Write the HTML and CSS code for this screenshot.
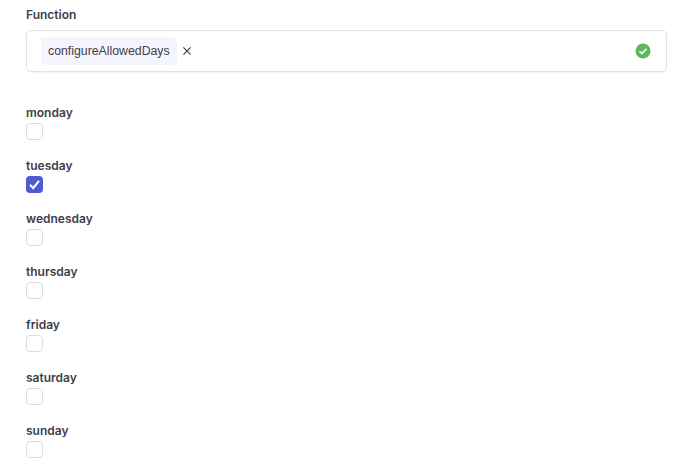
FILE: index.html
```html
<!DOCTYPE html>
<html lang="en">
<head>
<meta charset="utf-8">
<title>Function</title>
<link rel="stylesheet" href="styles.css">
</head>
<body>
<main class="form">
  <section class="function-field">
    <div class="label">Function</div>
    <div class="select">
      <span class="tag">configureAllowedDays</span>
      <svg class="remove" width="10" height="10" viewBox="0 0 10 10"><path d="M1.4 1.4 8.6 8.6M8.6 1.4 1.4 8.6" stroke="#34363f" stroke-width="1.1" fill="none"/></svg>
      <svg class="valid" width="16" height="16" viewBox="0 0 16 16"><circle cx="8" cy="8" r="7.5" fill="#5cb85c"/><path d="M4.4 8.3 6.9 10.6 11.6 5.8" stroke="#fff" stroke-width="1.6" fill="none"/></svg>
    </div>
  </section>
  <section class="days">
    <div class="day"><div class="label">monday</div><span class="box"></span></div>
    <div class="day"><div class="label">tuesday</div><span class="box checked"><svg width="17" height="17" viewBox="0 0 17 17"><path d="M4 8.8 7.2 12.2 13 4.8" stroke="#fff" stroke-width="2.1" fill="none"/></svg></span></div>
    <div class="day"><div class="label">wednesday</div><span class="box"></span></div>
    <div class="day"><div class="label">thursday</div><span class="box"></span></div>
    <div class="day"><div class="label">friday</div><span class="box"></span></div>
    <div class="day"><div class="label">saturday</div><span class="box"></span></div>
    <div class="day"><div class="label">sunday</div><span class="box"></span></div>
  </section>
</main>
</body>
</html>
```
FILE: styles.css
```css
html, body {
  margin: 0;
  padding: 0;
  background: #fff;
}
body {
  height: 473px;
  overflow: hidden;
  font-family: Inter, "Liberation Sans", sans-serif;
  color: #3d4049;
}
.form {
  padding: 7px 23px 0 26px;
}
.label {
  font-size: 12px;
  line-height: 16px;
  font-weight: 600;
}
.select {
  box-sizing: border-box;
  height: 42px;
  margin-top: 7px;
  padding: 0 15px 0 14px;
  display: flex;
  align-items: center;
  border: 1px solid #e3e3e6;
  border-radius: 5px;
  box-shadow: 0 1px 2px rgba(0, 0, 0, .06);
}
.tag {
  height: 28px;
  padding: 0 7px;
  display: flex;
  align-items: center;
  background: #f5f6fd;
  border-radius: 3px;
  font-family: "Liberation Sans", Arial, sans-serif;
  font-size: 12.3px;
}
.remove {
  margin-left: 5px;
}
.valid {
  margin-left: auto;
}
.days {
  margin-top: 33px;
  display: flex;
  flex-direction: column;
  gap: 18px;
}
.day {
  display: flex;
  flex-direction: column;
  gap: 2px;
}
.box {
  box-sizing: border-box;
  width: 17px;
  height: 17px;
  border: 1px solid #dcdcdf;
  border-radius: 4px;
  background: #fff;
  display: block;
}
.box.checked {
  border: 0;
  background: #4f5bd5;
}
.box svg {
  display: block;
}
```
